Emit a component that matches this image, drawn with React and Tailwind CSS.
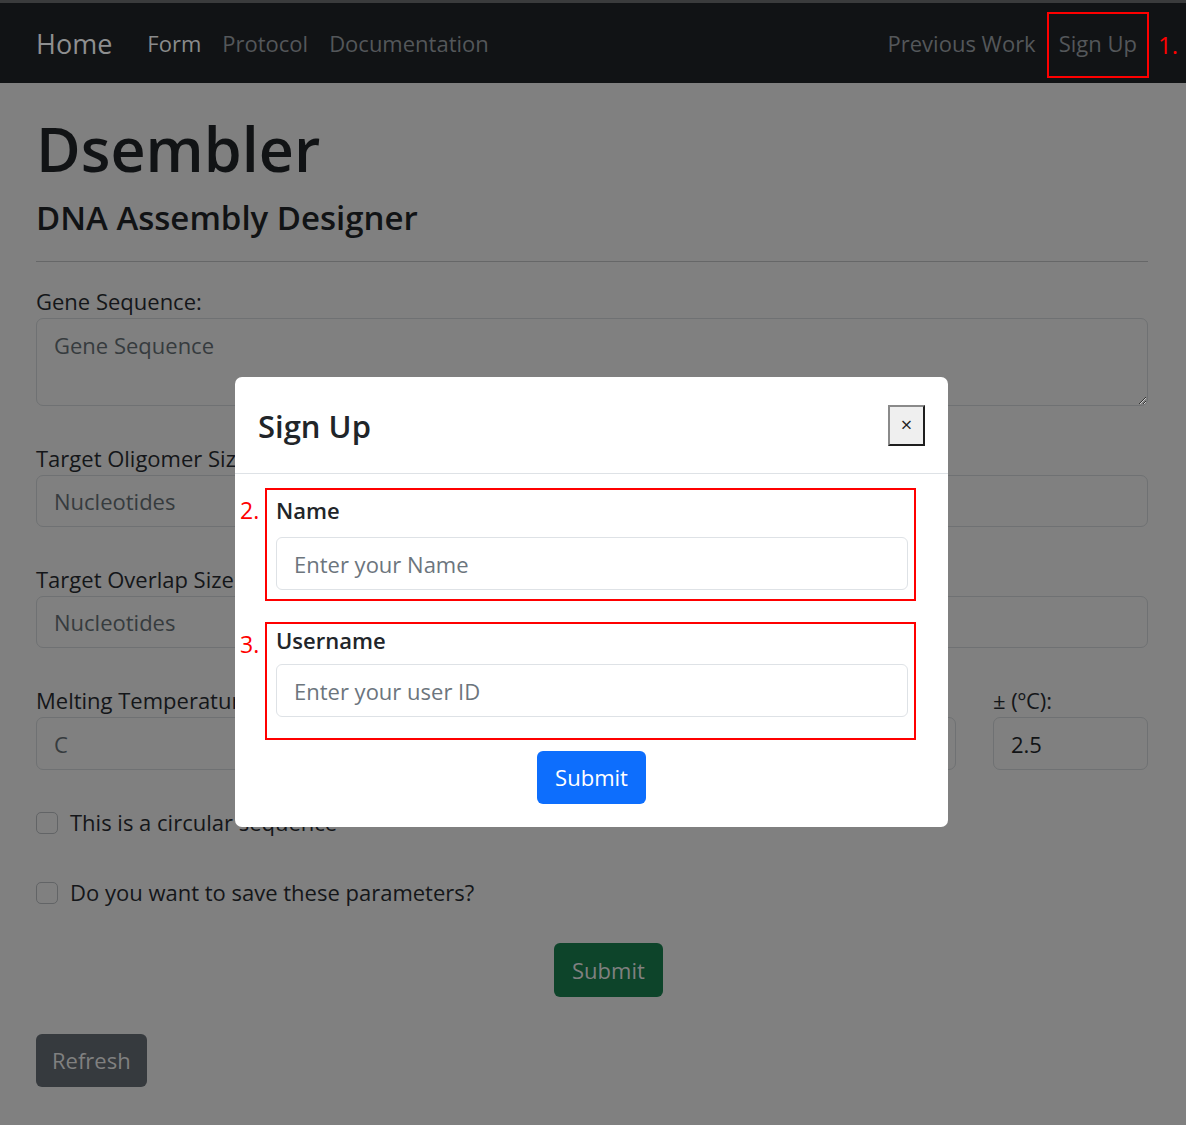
import {useState} from 'react';

function PageInput({placeholder, value, className = ''}) {
  return (
    <input
      type="text"
      placeholder={placeholder}
      defaultValue={value}
      className={`h-[52px] w-full rounded-[7px] border border-[#6f7173] bg-[#808080] pl-[17px] text-[22px] text-[#111315] outline-none placeholder:text-[#363b3e] ${className}`}
    />
  );
}

function Check({label}) {
  return (
    <label className="flex h-[33px] items-center gap-[12px] text-[22px] leading-[33px] text-[#141619]">
      <span className="h-[22px] w-[22px] rounded-[5px] border border-[#626466] bg-[#808080]" />
      {label}
    </label>
  );
}

function SignUpModal() {
  const [form, setForm] = useState({name: '', username: ''});

  const handleChange = (e) => {
    setForm({...form, [e.target.name]: e.target.value});
  };

  return (
    <div className="absolute left-[235px] top-[377px] w-[713px] rounded-[7px] bg-white">
      <div className="flex h-[97px] items-center justify-between border-b border-[#dee2e6] pl-[23px] pr-[23px]">
        <h5 className="pt-[2px] text-[31px] font-semibold leading-[40px] text-[#212529]">Sign Up</h5>
        <button
          type="button"
          className="flex h-[41px] w-[37px] items-center justify-center border-2 border-b-[#1e1e1e] border-l-[#8a8a8a] border-r-[#1e1e1e] border-t-[#8a8a8a] bg-[#efefef] text-[20px] leading-none text-[#222]"
        >
          ×
        </button>
      </div>

      <div className="pb-[23px] pl-[5px] pr-[32px] pt-[14px]">
        <div className="flex">
          <span className="w-[25px] pt-[6px] text-[23px] leading-[33px] text-[#ff0000]">2.</span>
          <div className="flex-1 border-2 border-[#ff0000] pb-[9px] pl-[9px] pr-[6px] pt-[4px]">
            <label className="block text-[22px] font-semibold leading-[33px] text-[#212529]">Name</label>
            <input
              type="text"
              name="name"
              value={form.name}
              onChange={handleChange}
              placeholder="Enter your Name"
              className="mt-[10px] h-[53px] w-full rounded-[6px] border border-[#dee2e6] bg-white pl-[17px] text-[22px] outline-none placeholder:text-[#6c757d]"
            />
          </div>
        </div>

        <div className="mt-[21px] flex">
          <span className="w-[25px] pt-[6px] text-[23px] leading-[33px] text-[#ff0000]">3.</span>
          <div className="flex-1 border-2 border-[#ff0000] pb-[21px] pl-[9px] pr-[6px]">
            <label className="block text-[22px] font-semibold leading-[33px] text-[#212529]">Username</label>
            <input
              type="text"
              name="username"
              value={form.username}
              onChange={handleChange}
              placeholder="Enter your user ID"
              className="mt-[7px] h-[53px] w-full rounded-[6px] border border-[#dee2e6] bg-white pl-[17px] text-[22px] outline-none placeholder:text-[#6c757d]"
            />
          </div>
        </div>

        <div className="mt-[11px] flex justify-center pl-[27px]">
          <button type="submit" className="h-[53px] rounded-[6px] bg-[#0d6efd] px-[18px] text-[22px] text-white">
            Submit
          </button>
        </div>
      </div>
    </div>
  );
}

export default function App() {
  return (
    <div className="min-h-[1125px] bg-white font-['Open_Sans',sans-serif]">
      <div className="relative min-h-[1125px] w-[1186px] bg-[#808080]">
        <div className="h-[3px] bg-[#3a3b3c]" />
        <nav className="flex h-[80px] items-center bg-[#111315] pl-[36px] pr-[8px]">
          <span className="text-[27px] leading-none text-[#8e8f90]">Home</span>
          <div className="ml-[35px] flex items-center gap-[21px] text-[22px]">
            <span className="text-[#8a8b8c]">Form</span>
            <span className="text-[#54575a]">Protocol</span>
            <span className="text-[#54575a]">Documentation</span>
          </div>
          <div className="ml-auto flex h-full items-start text-[22px]">
            <span className="mt-[24px] text-[#54575a]">Previous Work</span>
            <span className="ml-[11px] mt-[9px] flex h-[66px] items-center border-2 border-[#ff0000] pb-[4px] pl-[10px] pr-[10px] text-[#54575a]">
              Sign Up
            </span>
            <span className="ml-[9px] mt-[24px] text-[24px] text-[#ff0000]">1.</span>
          </div>
        </nav>

        <main className="pl-[36px] pr-[38px]">
          <h1 className="mt-[35px] text-[61px] font-semibold leading-[62px] text-[#111315]">Dsembler</h1>
          <h3 className="mt-[18px] text-[33px] font-semibold leading-[40px] text-[#111315]">DNA Assembly Designer</h3>
          <hr className="mt-[23px] border-t border-[#666768]" />

          <label className="mt-[23px] block text-[22px] leading-[33px] text-[#141619]">Gene Sequence:</label>
          <textarea
            placeholder="Gene Sequence"
            className="block h-[88px] w-full rounded-[7px] border border-[#6f7173] bg-[#808080] pl-[17px] pt-[10px] text-[22px] leading-[33px] outline-none placeholder:text-[#363b3e]"
          />

          <label className="mt-[36px] block text-[22px] leading-[33px] text-[#141619]">Target Oligomer Size:</label>
          <PageInput placeholder="Nucleotides" />

          <label className="mt-[36px] block text-[22px] leading-[33px] text-[#141619]">Target Overlap Size:</label>
          <PageInput placeholder="Nucleotides" />

          <div className="mt-[36px] flex gap-[37px]">
            <div className="flex-1">
              <label className="block text-[22px] leading-[33px] text-[#141619]">Melting Temperature (ºC):</label>
              <PageInput placeholder="C" className="h-[53px]" />
            </div>
            <div className="w-[155px]">
              <label className="block text-[22px] leading-[33px] text-[#141619]">± (ºC):</label>
              <PageInput value="2.5" className="h-[53px]" />
            </div>
          </div>

          <div className="mt-[36px]">
            <Check label="This is a circular sequence" />
          </div>
          <div className="mt-[37px]">
            <Check label="Do you want to save these parameters?" />
          </div>

          <button type="button" className="ml-[518px] mt-[34px] block h-[54px] rounded-[6px] bg-[#0d442a] px-[18px] text-[22px] text-[#808080]">
            Submit
          </button>
          <button type="button" className="mt-[37px] block h-[53px] rounded-[6px] bg-[#363a3e] px-[16px] text-[22px] text-[#808080]">
            Refresh
          </button>
        </main>

        <SignUpModal />
      </div>
    </div>
  );
}
